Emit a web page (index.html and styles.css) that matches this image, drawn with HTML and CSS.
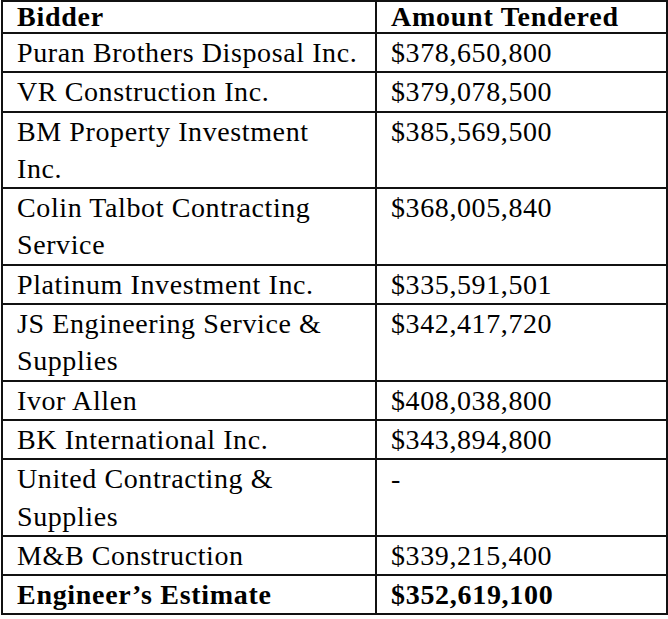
FILE: index.html
```html
<!DOCTYPE html>
<html lang="en">
<head>
<meta charset="utf-8">
<title>Bids</title>
<link rel="stylesheet" href="styles.css">
</head>
<body>
<table class="bids">
  <colgroup>
    <col class="col-bidder">
    <col class="col-amount">
  </colgroup>
  <thead>
    <tr><th>Bidder</th><th>Amount Tendered</th></tr>
  </thead>
  <tbody>
    <tr><td>Puran Brothers Disposal Inc.</td><td>$378,650,800</td></tr>
    <tr><td>VR Construction Inc.</td><td>$379,078,500</td></tr>
    <tr><td>BM Property Investment Inc.</td><td>$385,569,500</td></tr>
    <tr><td>Colin Talbot Contracting Service</td><td>$368,005,840</td></tr>
    <tr><td>Platinum Investment Inc.</td><td>$335,591,501</td></tr>
    <tr><td>JS Engineering Service &amp; Supplies</td><td>$342,417,720</td></tr>
    <tr><td>Ivor Allen</td><td>$408,038,800</td></tr>
    <tr><td>BK International Inc.</td><td>$343,894,800</td></tr>
    <tr><td>United Contracting &amp; Supplies</td><td>-</td></tr>
    <tr><td>M&amp;B Construction</td><td>$339,215,400</td></tr>
    <tr class="total"><td>Engineer’s Estimate</td><td>$352,619,100</td></tr>
  </tbody>
</table>
</body>
</html>
```
FILE: styles.css
```css
html, body {
  margin: 0;
  padding: 0;
  background: #fff;
}
body {
  padding: 0 0 0 1px;
  font-family: "Liberation Serif", "Times New Roman", serif;
  color: #000;
}
.bids {
  border-collapse: collapse;
  width: 665px;
  table-layout: fixed;
  font-size: 28px;
  letter-spacing: 0.6px;
}
.col-bidder { width: 374px; }
.col-amount { width: 291px; }
.bids th,
.bids td {
  border: 2px solid #111;
  padding: 0 16px 0 14px;
  text-align: left;
  vertical-align: top;
  line-height: 37.3px;
}
.bids th {
  font-weight: bold;
  line-height: 30px;
  letter-spacing: 0.75px;
}
.bids .total td {
  font-weight: bold;
  letter-spacing: 0.7px;
}
```
